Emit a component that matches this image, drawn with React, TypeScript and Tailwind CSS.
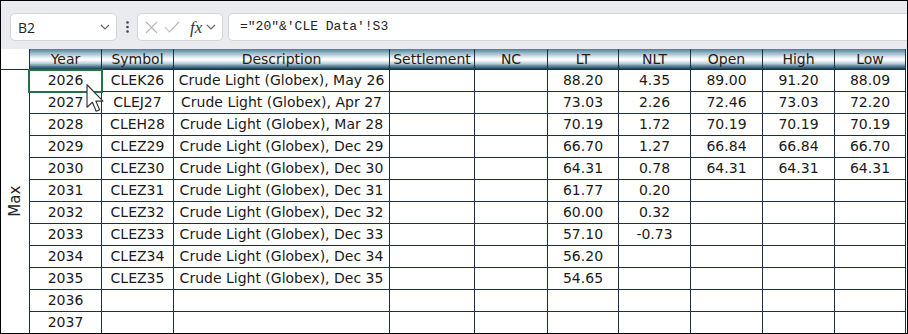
import { ReactNode } from "react";

type Row = {
	year: string;
	symbol?: string;
	month?: string;
	lt?: string;
	nlt?: string;
	open?: string;
	high?: string;
	low?: string;
};

const rows: Row[] = [
	{ year: "2026", symbol: "CLEK26", month: "May 26", lt: "88.20", nlt: "4.35", open: "89.00", high: "91.20", low: "88.09" },
	{ year: "2027", symbol: "CLEJ27", month: "Apr 27", lt: "73.03", nlt: "2.26", open: "72.46", high: "73.03", low: "72.20" },
	{ year: "2028", symbol: "CLEH28", month: "Mar 28", lt: "70.19", nlt: "1.72", open: "70.19", high: "70.19", low: "70.19" },
	{ year: "2029", symbol: "CLEZ29", month: "Dec 29", lt: "66.70", nlt: "1.27", open: "66.84", high: "66.84", low: "66.70" },
	{ year: "2030", symbol: "CLEZ30", month: "Dec 30", lt: "64.31", nlt: "0.78", open: "64.31", high: "64.31", low: "64.31" },
	{ year: "2031", symbol: "CLEZ31", month: "Dec 31", lt: "61.77", nlt: "0.20" },
	{ year: "2032", symbol: "CLEZ32", month: "Dec 32", lt: "60.00", nlt: "0.32" },
	{ year: "2033", symbol: "CLEZ33", month: "Dec 33", lt: "57.10", nlt: "-0.73" },
	{ year: "2034", symbol: "CLEZ34", month: "Dec 34", lt: "56.20" },
	{ year: "2035", symbol: "CLEZ35", month: "Dec 35", lt: "54.65" },
	{ year: "2036" },
	{ year: "2037" },
];

const widths = [
	"w-[72px]",
	"w-[72px]",
	"w-[216px]",
	"w-[85px]",
	"w-[73px]",
	"w-[71px]",
	"w-[72px]",
	"w-[72px]",
	"w-[72px]",
	"w-[71px]",
];

const headers = ["Year", "Symbol", "Description", "Settlement", "NC", "LT", "NLT", "Open", "High", "Low"];

const Chevron = () => (
	<svg width="10" height="6" viewBox="0 0 10 6" fill="none">
		<polyline points="1,1 5,5 9,1" stroke="#666" strokeWidth="1.2" />
	</svg>
);

const Cell = ({ w, children }: { w: string; children?: ReactNode }) => (
	<div className={`${w} shrink-0 h-full flex items-center justify-center border-r border-[#1b2f47] whitespace-nowrap overflow-hidden`}>
		{children}
	</div>
);

const FormulaBar = () => (
	<div className="h-[48px] bg-[#e9ebee] flex items-start pt-[12px] pl-[9px] border-b border-[#e9ebee]">
		<div className="w-[107px] h-[28px] rounded-[5px] border border-[#d3d5da] bg-white flex items-center justify-between pl-[7px] pr-[6px]">
			<span className="text-[14px] text-[#222] font-['Open_Sans',sans-serif]">B2</span>
			<Chevron />
		</div>
		<div className="w-[20px] h-[28px] flex items-center justify-center">
			<svg width="3" height="12" viewBox="0 0 3 12">
				<circle cx="1.5" cy="1.5" r="1.3" fill="#444" />
				<circle cx="1.5" cy="6" r="1.3" fill="#444" />
				<circle cx="1.5" cy="10.5" r="1.3" fill="#444" />
			</svg>
		</div>
		<div className="w-[86px] h-[28px] rounded-[5px] border border-[#d3d5da] bg-white flex items-center pl-[7px] pr-[4px] gap-[6px]">
			<svg width="13" height="13" viewBox="0 0 13 13">
				<path d="M1 1 L12 12 M12 1 L1 12" stroke="#b8b8b8" strokeWidth="1.1" />
			</svg>
			<svg width="16" height="12" viewBox="0 0 16 12">
				<polyline points="1,6 5.5,11 15,1" fill="none" stroke="#b8b8b8" strokeWidth="1.1" />
			</svg>
			<span className="ml-[4px] text-[17px] italic text-[#333] font-['Liberation_Serif',serif] leading-none">fx</span>
			<div className="-ml-[2px]">
				<Chevron />
			</div>
		</div>
		<div className="ml-[5px] flex-1 h-[28px] rounded-l-[5px] border border-r-0 border-[#d3d5da] bg-white flex items-center pl-[11px]">
			<span className="text-[13px] text-[#222] font-['Liberation_Mono',monospace]">="20"&amp;'CLE Data'!S3</span>
		</div>
	</div>
);

const Cursor = () => (
	<svg width="18" height="29" viewBox="0 0 12 20" className="absolute left-[56px] top-[35px]">
		<path
			d="M0.5 0.5 L0.5 16 L4.2 12.6 L6.8 18.8 L9.2 17.8 L6.6 11.8 L11.5 11.8 Z"
			fill="#fff"
			stroke="#333"
			strokeWidth="0.8"
			strokeLinejoin="round"
		/>
	</svg>
);

export default function App() {
	return (
		<div className="w-[908px] h-[334px] border border-black bg-white overflow-hidden flex flex-col font-['DejaVu_Sans',sans-serif] text-[14px] text-[#1a1a1a]">
			<FormulaBar />
			<div className="flex flex-1 min-h-0">
				<div className="w-[28px] shrink-0 flex flex-col">
					<div className="h-[21px] shrink-0 border-b border-[#1b2f47]" />
					<div className="flex-1 flex items-center justify-center">
						<span className="-rotate-90 text-[15px] text-[#222]">Max</span>
					</div>
				</div>
				<div className="relative border-l border-[#1b2f47] flex flex-col">
					<div className="h-[21px] shrink-0 flex border-b border-[#1b2f47] bg-[linear-gradient(to_bottom,#4f7e97_0%,#9fbccb_22%,#f0f5f8_45%,#ffffff_55%,#bcd1dc_72%,#50788f_88%,#1a425c_100%)] text-[#2a2012]">
						{headers.map((h, i) => (
							<Cell key={h} w={widths[i]}>
								{h}
							</Cell>
						))}
					</div>
					{rows.map((r) => (
						<div key={r.year} className="h-[22px] shrink-0 flex border-b border-[#1b2f47]">
							<Cell w={widths[0]}>{r.year}</Cell>
							<Cell w={widths[1]}>{r.symbol}</Cell>
							<Cell w={widths[2]}>{r.month ? `Crude Light (Globex), ${r.month}` : null}</Cell>
							<Cell w={widths[3]} />
							<Cell w={widths[4]} />
							<Cell w={widths[5]}>{r.lt}</Cell>
							<Cell w={widths[6]}>{r.nlt}</Cell>
							<Cell w={widths[7]}>{r.open}</Cell>
							<Cell w={widths[8]}>{r.high}</Cell>
							<Cell w={widths[9]}>{r.low}</Cell>
						</div>
					))}
					<div className="absolute left-[-2px] top-[20px] w-[75px] h-[24px] border-2 border-[#217346]" />
					<Cursor />
				</div>
			</div>
		</div>
	);
}
